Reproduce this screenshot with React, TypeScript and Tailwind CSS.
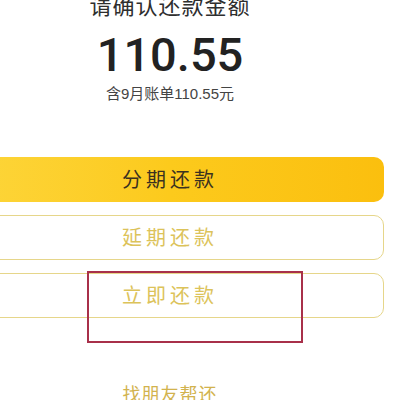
// Repayment confirmation screen (cropped phone screenshot with a red annotation box).

const FONT = { fontFamily: '"Liberation Sans", "Noto Sans CJK SC", sans-serif' };

function OutlineButton({ label }: { label: string }) {
  return (
    <button className="flex h-[45px] w-full items-center justify-center rounded-[10px] border border-[#e6d68a] bg-white text-[20px] leading-none tracking-[4px] text-[#dcc35a]">
      {label}
    </button>
  );
}

export default function App() {
  return (
    <div
      className="relative h-[400px] w-[400px] overflow-hidden bg-white"
      style={FONT}
    >
      <div className="-ml-[44px] flex w-[428px] flex-col items-center">
        <h1 className="-mt-[4px] text-[22px] leading-[22px] tracking-[1px] text-[#2e2e2e]">
          请确认还款金额
        </h1>
        <div className="mt-[13px] font-['Roboto',sans-serif] text-[47px] font-medium leading-[47px] text-[#222222]">
          110.55
        </div>
        <p className="mt-[8px] text-[15px] leading-[15px] text-[#444444]">
          含9月账单110.55元
        </p>

        <div className="mt-[56px] flex w-full flex-col gap-[13px]">
          <button className="flex h-[45px] w-full items-center justify-center rounded-[10px] bg-gradient-to-r from-[#fdd63a] via-[#fcca1c] to-[#fbbf0e] text-[20px] leading-none tracking-[4px] text-[#3a3120]">
            分期还款
          </button>
          <OutlineButton label="延期还款" />
          <OutlineButton label="立即还款" />
        </div>

        <div className="mt-[68px] text-[18px] leading-[18px] tracking-[1px] text-[#d2b34e]">
          找朋友帮还
        </div>
      </div>

      {/* annotation box drawn over the screenshot */}
      <div className="absolute left-[87px] top-[271px] h-[72px] w-[216px] border-2 border-[#a8304a]" />
    </div>
  );
}
